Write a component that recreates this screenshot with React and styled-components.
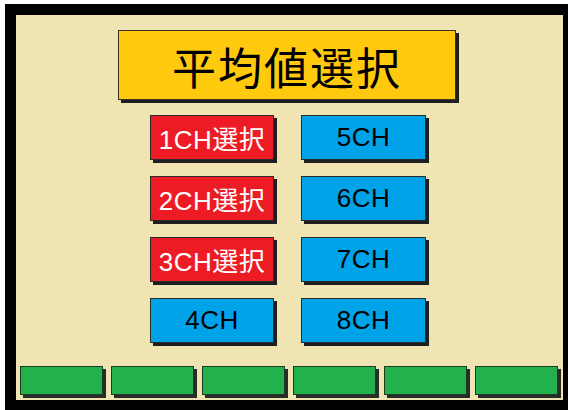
import React from 'react';
import styled, { createGlobalStyle } from 'styled-components';

const GlobalStyle = createGlobalStyle`
  html, body {
    margin: 0;
    padding: 0;
    background: #fff;
    overflow: hidden;
  }
`;

const Frame = styled.div`
  margin: 4px 0 0 5px;
  width: 537px;
  height: 365px;
  padding: 15px 6px 5px 4px;
  border: 11px solid #000;
  background: #f0e4b2;
  display: flex;
  flex-direction: column;
  align-items: center;
  font-family: "Liberation Sans", "Noto Sans CJK JP", sans-serif;
`;

const Title = styled.div`
  width: 338px;
  height: 70px;
  box-sizing: border-box;
  margin-left: -3px;
  background: #ffc90e;
  border: 1px solid #3a3020;
  box-shadow: 3px 3px 0 #1e1e1e;
  display: flex;
  align-items: center;
  justify-content: center;
  font-family: "Noto Sans CJK JP", sans-serif;
  font-size: 44px;
  letter-spacing: 2px;
  color: #000;
  padding-top: 2px;
`;

const Grid = styled.div`
  margin-top: 15px;
  margin-left: -1px;
  display: grid;
  grid-template-columns: 124px 125px;
  grid-auto-rows: 45px;
  column-gap: 27px;
  row-gap: 16px;
`;

const ChButton = styled.div`
  box-sizing: border-box;
  background: ${p => (p.$selected ? '#ed1c24' : '#00a2e8')};
  color: ${p => (p.$selected ? '#fff' : '#000')};
  border: 1px solid #2a2a2a;
  box-shadow: 3px 3px 0 #1e1e1e;
  display: flex;
  align-items: center;
  justify-content: center;
  font-size: 26px;
  letter-spacing: 0.5px;
`;

const Footer = styled.div`
  margin-top: auto;
  align-self: stretch;
  display: flex;
  gap: 8px;
`;

const FootButton = styled.div`
  flex: 0 0 83px;
  height: 29px;
  box-sizing: border-box;
  background: #22b14c;
  border: 1px solid #1d3a22;
  box-shadow: 3px 3px 0 #2a2a2a;
`;

const channels = [
  { left: '1CH選択', right: '5CH', sel: true },
  { left: '2CH選択', right: '6CH', sel: true },
  { left: '3CH選択', right: '7CH', sel: true },
  { left: '4CH', right: '8CH', sel: false },
];

const App = () => {
  return (
    <>
      <GlobalStyle />
      <Frame>
        <Title>平均値選択</Title>
        <Grid>
          {channels.map(c => (
            <React.Fragment key={c.right}>
              <ChButton $selected={c.sel}>{c.left}</ChButton>
              <ChButton>{c.right}</ChButton>
            </React.Fragment>
          ))}
        </Grid>
        <Footer>
          {[0, 1, 2, 3, 4, 5].map(i => (
            <FootButton key={i} />
          ))}
        </Footer>
      </Frame>
    </>
  );
};

export default App;
